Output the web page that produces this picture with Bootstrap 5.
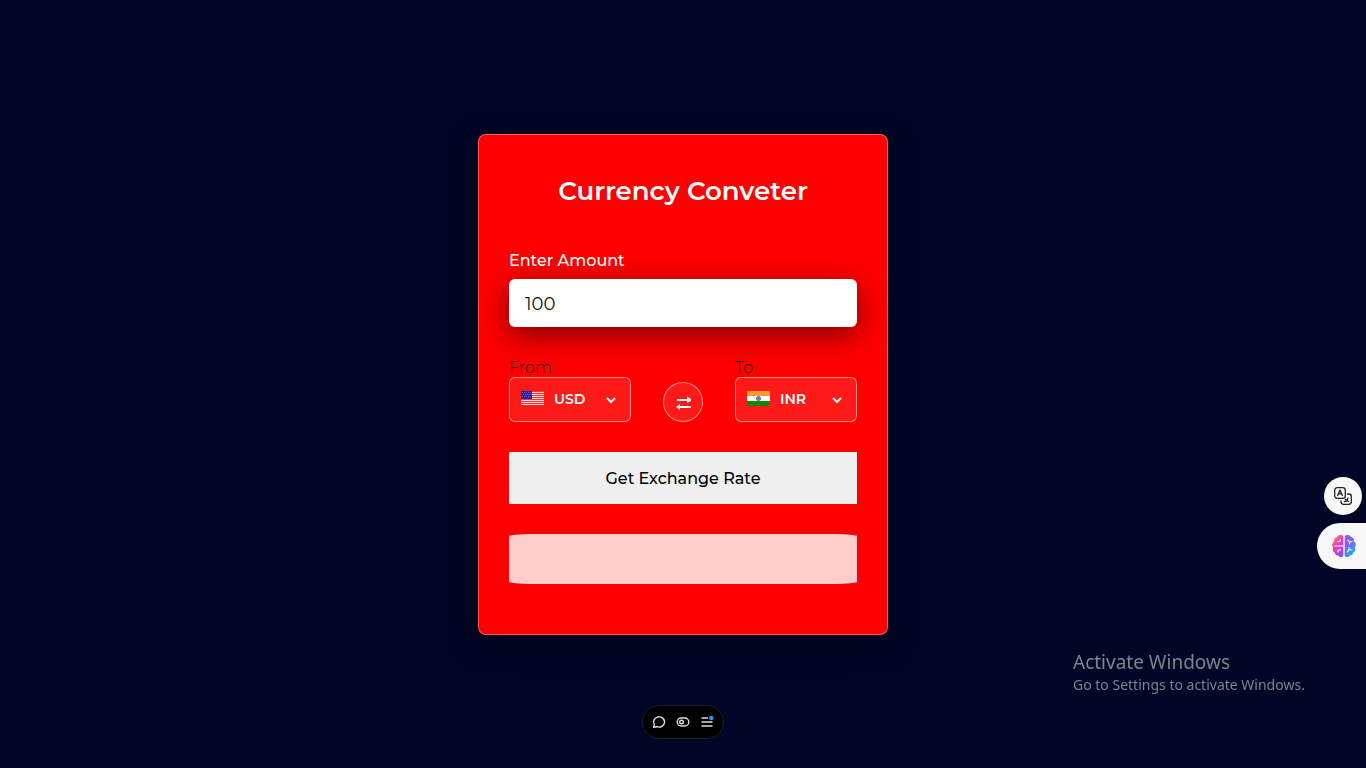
<!DOCTYPE html>
<html lang="en">
<head>
<meta charset="utf-8">
<meta name="viewport" content="width=device-width, initial-scale=1">
<title>Currency Conveter</title>
<link href="https://cdn.jsdelivr.net/npm/bootstrap@5.3.0/dist/css/bootstrap.min.css" rel="stylesheet">
<style>
  body { background: #020626; font-family: Montserrat, Inter, sans-serif; line-height: 20px; }
  .converter { width: 100%; max-width: 410px; padding: 36px 30px 50px; background: #f00; border: 1px solid rgba(255,255,255,.35); border-radius: 8px; box-shadow: 0 8px 32px rgba(0,0,0,.35); }
  .converter-title { font-size: 26px; line-height: 40px; font-weight: 600; margin-bottom: 40px; }
  .amount-label { font-size: 16px; font-weight: 500; margin-bottom: 8px; }
  .amount-input, .amount-input:focus { height: 48px; border: 0; border-radius: 6px; padding: 2px 16px 0; font-size: 18px; color: #111; background: #fff; box-shadow: 0 8px 30px rgba(0,0,0,.5); }
  .currency-row { margin: 28px 0 30px; }
  .side-label { font-size: 16px; line-height: 18px; padding-top: 4px; font-weight: 300; color: #111; }
  .glass { background: rgba(255,255,255,.1); border: 1px solid rgba(255,255,255,.5); }
  .currency-box { width: 122px; height: 45px; border-radius: 6px; padding: 0 12px 0 10px; }
  .currency-box select { appearance: none; background: transparent; border: 0; outline: 0; color: #fff; font-size: 14px; font-weight: 600; width: 48px; padding: 0; margin-left: 10px; }
  .currency-box option { color: #111; }
  .swap-button { width: 40px; height: 40px; }
  .rate-button { height: 52px; border-radius: 0; background: #efefef; color: #000; font-size: 16px; font-weight: 500; padding: 8px 12px 6px; }
  .rate-button:hover { background: #e5e5e5; color: #000; }
  .result-field { height: 50px; margin-top: 30px; }
  .result-field::before { content: ""; display: block; height: 50px; margin: 0 -8px; border-radius: 28px / 6px; background: rgba(255,255,255,.8); }
  .side-tools { top: 477px; gap: 8px; }
  .tool-round { width: 38px; height: 38px; margin-right: 4px; background: #f8f8f9; }
  .tool-tab { width: 49px; height: 46px; background: #f8f8f9; border-radius: 23px 0 0 23px; padding: 0 10px; }
  .dock { width: 82px; height: 34px; bottom: 29px; background: #000; border: 1px solid #1a1c30; padding: 0 8px; }
  .dock button { width: 16px; height: 16px; }
  .notice { right: 57px; bottom: 73px; width: 236px; color: #80828c; font-family: "Segoe UI", "Noto Sans", sans-serif; font-size: 14px; line-height: 20px; }
  .notice-title { font-size: 19px; line-height: 26px; }
  @media (max-height: 640px) { .dock, .notice { display: none; } }
</style>
</head>
<body>
<main class="min-vh-100 d-flex align-items-center justify-content-center">
  <form class="converter">
    <h1 class="converter-title text-center text-white">Currency Conveter</h1>
    <label for="amount" class="amount-label d-block text-white">Enter Amount</label>
    <input id="amount" type="text" inputmode="decimal" class="form-control amount-input" value="100">
    <div class="currency-row d-flex justify-content-between align-items-end">
      <div>
        <label for="from" class="side-label d-block">From</label>
        <div class="currency-box glass d-flex align-items-center">
          <svg class="flex-shrink-0" width="24" height="23" viewBox="0 0 24 23" aria-hidden="true">
            <path fill="#ffd6d6" d="M1 3h23v14H1z"/>
            <path fill="#f6343a" d="M1 3h23v1H1zM1 5h23v1H1zM1 7h23v1H1zM1 9h23v1H1zM1 11h23v1H1zM1 13h23v1H1zM1 15h23v1H1z"/>
            <path fill="#2424a6" d="M1 3h11v8H1z"/>
            <path stroke="#5a5ac0" stroke-width="1" stroke-dasharray="1 1" d="M2 4.500h10M3 6.500h9M2 8.500h10"/>
          </svg>
          <select id="from"><option>USD</option><option>INR</option></select>
          <svg class="ms-auto flex-shrink-0" width="14" height="13" viewBox="0 0 14 13" fill="none" stroke="#fff" stroke-width="2" aria-hidden="true"><path d="m3 5 4 4 4-4"/></svg>
        </div>
      </div>
      <button type="button" class="swap-button glass btn rounded-circle p-0 d-flex align-items-center justify-content-center" aria-label="Swap currencies">
        <svg width="16" height="16" viewBox="0 0 16 16" aria-hidden="true"><path fill="none" stroke="#fff" stroke-width="2" d="M2 6h11M4 13h12"/><path fill="#fff" d="M12 2.500 16 5v2l-4 2zM5 10l-4 3 4 3z"/></svg>
      </button>
      <div>
        <label for="to" class="side-label d-block">To</label>
        <div class="currency-box glass d-flex align-items-center">
          <svg class="flex-shrink-0" width="24" height="23" viewBox="0 0 24 23" aria-hidden="true">
            <path fill="#ff9933" d="M1 3h23v5H1z"/><path fill="#fff" d="M1 8h23v5H1z"/><path fill="#138808" d="M1 13h23v5H1z"/>
            <circle cx="12.500" cy="10.500" r="2" fill="#aab" stroke="#5555b8"/><circle cx="12.500" cy="10.500" r=".8" fill="#22228a"/>
          </svg>
          <select id="to"><option>INR</option><option>USD</option></select>
          <svg class="ms-auto flex-shrink-0" width="14" height="13" viewBox="0 0 14 13" fill="none" stroke="#fff" stroke-width="2" aria-hidden="true"><path d="m3 5 4 4 4-4"/></svg>
        </div>
      </div>
    </div>
    <button type="button" class="rate-button btn border-0 w-100">Get Exchange Rate</button>
    <output class="result-field d-block overflow-hidden" for="amount from to"></output>
  </form>
</main>

<aside class="side-tools position-fixed end-0 d-flex flex-column align-items-end">
  <button type="button" class="tool-round btn border-0 rounded-circle p-0 d-flex align-items-center justify-content-center" aria-label="Translate">
    <svg width="18" height="18" viewBox="0 0 18 18" fill="none" stroke="#222" stroke-width="1.300" stroke-linecap="round" stroke-linejoin="round"><rect x=".7" y=".7" width="10.600" height="10.600" rx="2.500"/><path d="m3.600 8.500 2.400-5.500 2.400 5.500M4.500 6.800h3M13.500 7h1.300a2.500 2.500 0 0 1 2.500 2.500v5.300a2.500 2.500 0 0 1-2.500 2.500H9.500A2.500 2.500 0 0 1 7 14.800v-1M10.500 14.500c2 0 3-1.500 3.500-3.700M11.300 12.200l3 2.300"/></svg>
  </button>
  <button type="button" class="tool-tab btn border-0 d-flex align-items-center justify-content-end" aria-label="Assistant">
    <svg class="flex-shrink-0" width="24" height="24" viewBox="0 0 24 24" aria-hidden="true">
      <defs>
        <linearGradient id="brainLeft" x1="0" y1="0" x2=".5" y2="1"><stop offset=".1" stop-color="#ff9d2e"/><stop offset=".45" stop-color="#f23fae"/><stop offset="1" stop-color="#a044f5"/></linearGradient>
        <linearGradient id="brainRight" x1="0" y1="0" x2=".6" y2="1"><stop stop-color="#a94df5"/><stop offset=".5" stop-color="#7764ff"/><stop offset="1" stop-color="#12b0ff"/></linearGradient>
      </defs>
      <path fill="url(#brainLeft)" d="M11.300 2.500v19c-1 2-4 2-5 0-2 .2-3.500-1.300-3.500-3C.8 17.500.2 15 1.300 13.300-.5 11.500 0 8.500 2.200 7.500 1.600 5 3 3.300 5 3c1-2.500 5-2.500 6.300-.5z"/>
      <path fill="url(#brainRight)" d="M12.700 2.500v19c1 2 4 2 5 0 2 .2 3.500-1.300 3.500-3 2-1 2.600-3.500 1.500-5.200 1.800-1.800 1.300-4.800-.9-5.800.6-2.500-.8-4.200-2.800-4.500-1-2.500-5-2.500-6.300-.5z"/>
      <path fill="none" stroke="#f8f8f9" stroke-width="1.200" stroke-linecap="round" d="M3 12h8M5.500 7.500c1.500.5 2.800-.2 3-1.700M6 18c-.2-1.500.8-2.400 2.500-2.200M16 6l1.500 2 2.500-.5M17.500 8v2M15.500 18l1.500-2.500 3 .5M17 15.500v-2"/>
    </svg>
  </button>
</aside>

<nav class="dock position-fixed start-50 translate-middle-x rounded-pill d-flex align-items-center justify-content-between" aria-label="Toolbar">
  <button type="button" class="btn border-0 p-0 d-flex" aria-label="Comments"><svg width="16" height="16" viewBox="0 0 16 16" fill="none" stroke="#ddd" stroke-width="1.400" stroke-linejoin="round"><path d="M2.600 13.300 3.300 10.500A5.500 5.100 0 1 1 6 12.700z"/></svg></button>
  <button type="button" class="btn border-0 p-0 d-flex" aria-label="Preview"><svg width="16" height="16" viewBox="0 0 16 16" fill="none" stroke="#ddd" stroke-width="1.400"><rect x="2.200" y="4" width="11.600" height="8" rx="4"/><circle cx="6.500" cy="8" r="1.800"/></svg></button>
  <button type="button" class="btn border-0 p-0 d-flex" aria-label="Menu"><svg width="16" height="16" viewBox="0 0 16 16" fill="none" stroke="#ddd" stroke-width="1.400"><path d="M2.500 4h6.500M2.500 8h11M2.500 12h11"/><circle cx="12.300" cy="4" r="2.200" fill="#2994ff" stroke="none"/></svg></button>
</nav>

<div class="notice position-fixed">
  <div class="notice-title">Activate Windows</div>
  <div>Go to Settings to activate Windows.</div>
</div>
<script src="https://cdn.jsdelivr.net/npm/bootstrap@5.3.0/dist/js/bootstrap.bundle.min.js"></script>
</body>
</html>
